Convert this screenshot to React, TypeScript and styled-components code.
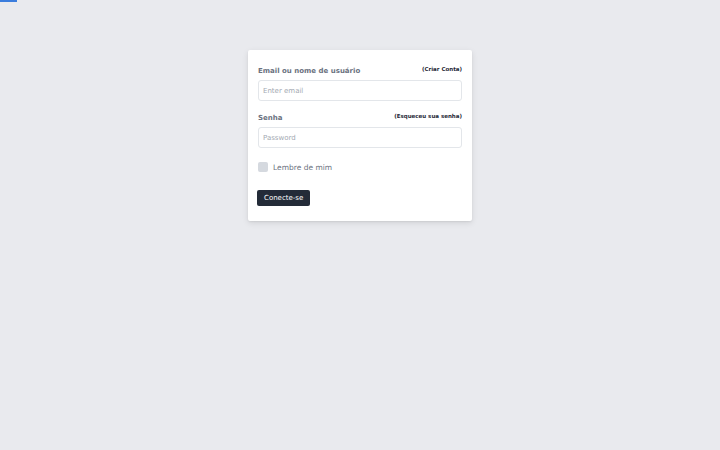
import React from "react";
import styled, { createGlobalStyle } from "styled-components";

const Global = createGlobalStyle`
  html, body { margin: 0; padding: 0; }
  body {
    background: #e9eaee;
    font-family: "DejaVu Sans", "Noto Sans", sans-serif;
    width: 720px;
    height: 450px;
    overflow: hidden;
  }
`;

const Page = styled.div`
  position: relative;
  width: 720px;
  height: 450px;
  display: flex;
  justify-content: center;
  align-items: flex-start;
  padding-top: 50px;
  box-sizing: border-box;
`;

const Progress = styled.div`
  position: absolute;
  top: 0;
  left: 0;
  width: 17px;
  height: 2px;
  background: #3b7ddd;
`;

const Card = styled.form`
  width: 224px;
  box-sizing: border-box;
  background: #ffffff;
  border-radius: 2px;
  box-shadow: 0 2px 6px rgba(0, 0, 0, 0.1), 0 1px 2px rgba(0, 0, 0, 0.06);
  padding: 15px 10px 15px;
  display: flex;
  flex-direction: column;
`;

const Field = styled.div<{ $gap?: number }>`
  display: flex;
  flex-direction: column;
  margin-bottom: ${(p) => p.$gap ?? 0}px;
`;

const LabelRow = styled.div`
  display: flex;
  justify-content: space-between;
  align-items: center;
  height: 12px;
  margin-bottom: 3px;
`;

const Label = styled.label`
  font-size: 7px;
  font-weight: 700;
  color: #6b7280;
  line-height: 12px;
`;

const SmallLink = styled.a`
  font-size: 5.5px;
  font-weight: 700;
  color: #1f2937;
  text-decoration: none;
  margin-top: -5px;
`;

const Input = styled.input`
  display: block;
  height: 21px;
  box-sizing: border-box;
  border: 1px solid #e3e6ea;
  border-radius: 3px;
  padding: 0 4px;
  margin: 0;
  font-family: inherit;
  font-size: 7px;
  color: #374151;
  outline: none;
  &::placeholder { color: #a3a9b2; }
`;

const CheckRow = styled.label`
  display: flex;
  align-items: center;
  gap: 5px;
  height: 10px;
  margin-bottom: 18px;
`;

const Box = styled.span`
  width: 10px;
  height: 10px;
  border-radius: 2px;
  background: #d5d9df;
  display: inline-block;
`;

const CheckText = styled.span`
  font-size: 7.5px;
  color: #6b7280;
`;

const Button = styled.button`
  align-self: flex-start;
  height: 16px;
  padding: 0 7px;
  border: none;
  border-radius: 2px;
  background: #232b38;
  color: #ffffff;
  font-family: inherit;
  font-size: 7px;
  line-height: 16px;
  margin-left: -1px;
`;

export default function App() {
  return (
    <>
      <Global />
      <Page>
        <Progress />
        <Card onSubmit={(e) => e.preventDefault()}>
          <Field $gap={11}>
            <LabelRow>
              <Label>Email ou nome de usuário</Label>
              <SmallLink href="#">(Criar Conta)</SmallLink>
            </LabelRow>
            <Input placeholder="Enter email" />
          </Field>
          <Field $gap={14}>
            <LabelRow>
              <Label>Senha</Label>
              <SmallLink href="#">(Esqueceu sua senha)</SmallLink>
            </LabelRow>
            <Input type="password" placeholder="Password" />
          </Field>
          <CheckRow>
            <Box />
            <CheckText>Lembre de mim</CheckText>
          </CheckRow>
          <Button type="submit">Conecte-se</Button>
        </Card>
      </Page>
    </>
  );
}
